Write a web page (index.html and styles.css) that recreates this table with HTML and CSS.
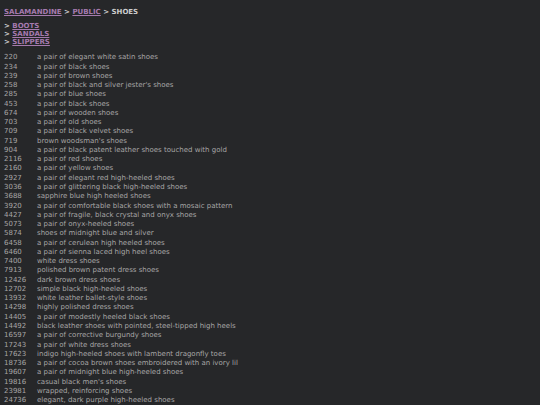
FILE: index.html
```html
<!DOCTYPE html>
<html lang="en">
<head>
    <meta charset="UTF-8">
    <title>shoes</title>
    <link rel="stylesheet" href="styles.css">
</head>
<body>
    <div class="crumbs">
        <a href="#">SALAMANDINE</a> &gt; <a href="#">PUBLIC</a> &gt; SHOES
    </div>
    <ul class="subdirs">
        <li>&gt; <a href="#">BOOTS</a></li>
        <li>&gt; <a href="#">SANDALS</a></li>
        <li>&gt; <a href="#">SLIPPERS</a></li>
    </ul>
    <table class="items">
        <tr><td>220</td><td>a pair of elegant white satin shoes</td></tr>
        <tr><td>234</td><td>a pair of black shoes</td></tr>
        <tr><td>239</td><td>a pair of brown shoes</td></tr>
        <tr><td>258</td><td>a pair of black and silver jester's shoes</td></tr>
        <tr><td>285</td><td>a pair of blue shoes</td></tr>
        <tr><td>453</td><td>a pair of black shoes</td></tr>
        <tr><td>674</td><td>a pair of wooden shoes</td></tr>
        <tr><td>703</td><td>a pair of old shoes</td></tr>
        <tr><td>709</td><td>a pair of black velvet shoes</td></tr>
        <tr><td>719</td><td>brown woodsman's shoes</td></tr>
        <tr><td>904</td><td>a pair of black patent leather shoes touched with gold</td></tr>
        <tr><td>2116</td><td>a pair of red shoes</td></tr>
        <tr><td>2160</td><td>a pair of yellow shoes</td></tr>
        <tr><td>2927</td><td>a pair of elegant red high-heeled shoes</td></tr>
        <tr><td>3036</td><td>a pair of glittering black high-heeled shoes</td></tr>
        <tr><td>3688</td><td>sapphire blue high heeled shoes</td></tr>
        <tr><td>3920</td><td>a pair of comfortable black shoes with a mosaic pattern</td></tr>
        <tr><td>4427</td><td>a pair of fragile, black crystal and onyx shoes</td></tr>
        <tr><td>5073</td><td>a pair of onyx-heeled shoes</td></tr>
        <tr><td>5874</td><td>shoes of midnight blue and silver</td></tr>
        <tr><td>6458</td><td>a pair of cerulean high heeled shoes</td></tr>
        <tr><td>6460</td><td>a pair of sienna laced high heel shoes</td></tr>
        <tr><td>7400</td><td>white dress shoes</td></tr>
        <tr><td>7913</td><td>polished brown patent dress shoes</td></tr>
        <tr><td>12426</td><td>dark brown dress shoes</td></tr>
        <tr><td>12702</td><td>simple black high-heeled shoes</td></tr>
        <tr><td>13932</td><td>white leather ballet-style shoes</td></tr>
        <tr><td>14298</td><td>highly polished dress shoes</td></tr>
        <tr><td>14405</td><td>a pair of modestly heeled black shoes</td></tr>
        <tr><td>14492</td><td>black leather shoes with pointed, steel-tipped high heels</td></tr>
        <tr><td>16597</td><td>a pair of corrective burgundy shoes</td></tr>
        <tr><td>17243</td><td>a pair of white dress shoes</td></tr>
        <tr><td>17623</td><td>indigo high-heeled shoes with lambent dragonfly toes</td></tr>
        <tr><td>18736</td><td>a pair of cocoa brown shoes embroidered with an ivory lil</td></tr>
        <tr><td>19607</td><td>a pair of midnight blue high-heeled shoes</td></tr>
        <tr><td>19816</td><td>casual black men's shoes</td></tr>
        <tr><td>23981</td><td>wrapped, reinforcing shoes</td></tr>
        <tr><td>24736</td><td>elegant, dark purple high-heeled shoes</td></tr>
    </table>
</body>
</html>
```
FILE: styles.css
```css
body {
    margin: 0;
    padding: 7.5px 4px 0;
    background-color: #262729;
    color: #a6a6a6;
    font-family: "DejaVu Sans", Verdana, sans-serif;
    font-size: 7px;
    line-height: 9.26px;
}
a {
    color: #a57aae;
}
.crumbs {
    font-weight: bold;
    color: #cdcdcd;
    margin-bottom: 5.3px;
}
.subdirs {
    list-style: none;
    margin: 0 0 6.6px 0;
    padding: 0;
    font-weight: bold;
    color: #cdcdcd;
    line-height: 8.2px;
}
.items {
    border-collapse: collapse;
}
.items td {
    padding: 0;
    white-space: nowrap;
}
.items td:first-child {
    width: 33px;
}
```
